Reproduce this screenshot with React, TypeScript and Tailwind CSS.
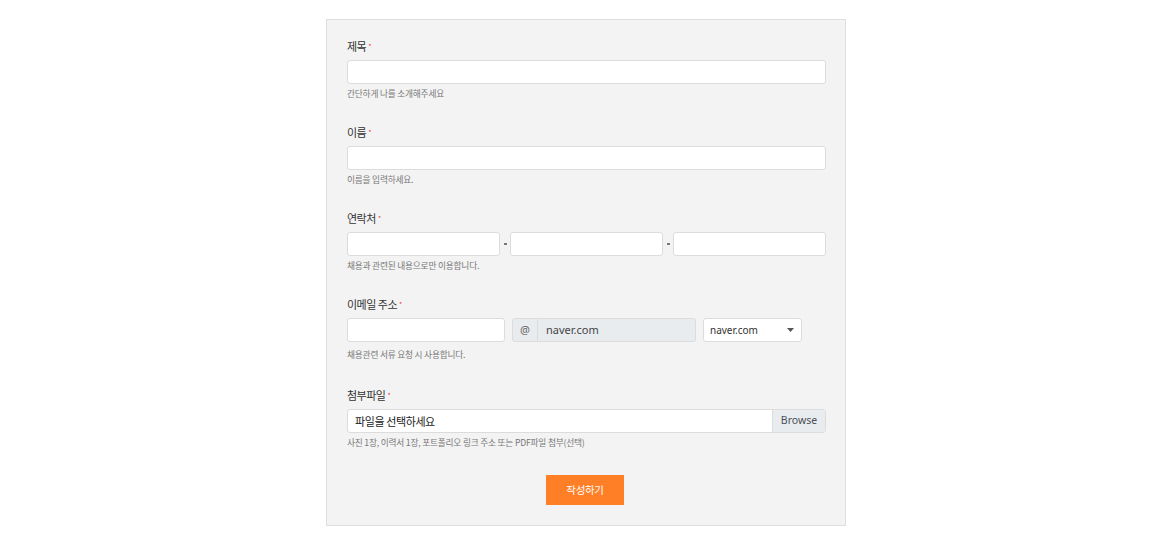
import React from "react";

const font = { fontFamily: '"Noto Sans CJK KR", "Noto Sans", sans-serif' };

function Label({ text, mb = "mb-[5px]" }: { text: string; mb?: string }) {
  return (
    <div className={`h-[18px] leading-[18px] text-[11px] tracking-[-0.5px] text-[#333] ${mb} flex items-start`}>
      <span>{text}</span>
      <span className="text-[#e8414b] text-[7px] leading-none mt-[6px] ml-[2px]">*</span>
    </div>
  );
}

function Help({ text, mt = "mt-[3px]" }: { text: string; mt?: string }) {
  return (
    <div className={`${mt} h-[14px] leading-[14px] text-[8.7px] tracking-[-0.2px] text-[#777]`}>{text}</div>
  );
}

const inputCls = "h-[24px] bg-white border border-[#dcdcdc] rounded-[3px]";

export default function App() {
  return (
    <div className="w-full h-[536px] bg-white flex justify-center pt-[19px] pl-[2px]" style={font}>
      <div className="w-[520px] h-[507px] bg-[#f3f3f3] border border-[#dedede] pl-[20px] pr-[19px] pt-[17px] pb-[19px] flex flex-col">
        {/* 제목 */}
        <div className="mb-[22px]">
          <Label text="제목" />
          <div className={`${inputCls} w-full`} />
          <Help text="간단하게 나를 소개해주세요" />
        </div>
        {/* 이름 */}
        <div className="mb-[22px]">
          <Label text="이름" />
          <div className={`${inputCls} w-full`} />
          <Help text="이름을 입력하세요." />
        </div>
        {/* 연락처 */}
        <div className="mb-[22px]">
          <Label text="연락처" />
          <div className="flex items-center">
            <div className={`${inputCls} w-[153px]`} />
            <div className="w-[10px] flex justify-center">
              <span className="block w-[3px] h-[2px] bg-[#777]" />
            </div>
            <div className={`${inputCls} w-[153px]`} />
            <div className="w-[10px] flex justify-center">
              <span className="block w-[3px] h-[2px] bg-[#777]" />
            </div>
            <div className={`${inputCls} flex-1`} />
          </div>
          <Help text="채용과 관련된 내용으로만 이용합니다." />
        </div>
        {/* 이메일 */}
        <div className="mb-[24px]">
          <Label text="이메일 주소" />
          <div className="flex items-center">
            <div className={`${inputCls} w-[158px]`} />
            <div className="ml-[7px] flex h-[24px] w-[184px]">
              <div className="w-[26px] h-full bg-[#e9ecef] border border-[#dcdcdc] rounded-l-[3px] flex items-center justify-center text-[11px] text-[#666]" style={{ fontFamily: '"Noto Sans", sans-serif' }}>
                @
              </div>
              <div className="flex-1 h-full bg-[#e9ecef] border border-l-0 border-[#dcdcdc] rounded-r-[3px] flex items-center pl-[8px] text-[11px] text-[#444]" style={{ fontFamily: '"Noto Sans", sans-serif' }}>
                naver.com
              </div>
            </div>
            <div className="ml-[7px] w-[99px] h-[24px] bg-white border border-[#dcdcdc] rounded-[3px] flex items-center justify-between pl-[6px] pr-[7px] text-[10px] text-[#333]" style={{ fontFamily: '"Noto Sans", sans-serif' }}>
              <span>naver.com</span>
              <svg width="7" height="4" viewBox="0 0 7 4">
                <path d="M0 0 L7 0 L3.5 4 Z" fill="#555" />
              </svg>
            </div>
          </div>
          <Help text="채용관련 서류 요청 시 사용합니다." mt="mt-[6px]" />
        </div>
        {/* 첨부파일 */}
        <div>
          <Label text="첨부파일" />
          <div className={`${inputCls} w-full flex items-stretch overflow-hidden`}>
            <div className="flex-1 flex items-center pl-[7px] text-[11px] tracking-[-0.4px] text-[#222]">파일을 선택하세요</div>
            <div className="w-[53px] bg-[#e9ecef] border-l border-[#dcdcdc] flex items-center justify-center text-[10.5px] text-[#495057]" style={{ fontFamily: '"Noto Sans", sans-serif' }}>
              Browse
            </div>
          </div>
          <Help text="사진 1장, 이력서 1장, 포트폴리오 링크 주소 또는 PDF파일 첨부(선택)" />
        </div>
        <div className="mt-[25px] flex justify-center pr-[3px]">
          <button className="w-[78px] h-[30px] bg-[#ff7f27] text-white text-[10.5px] tracking-[-0.3px]">작성하기</button>
        </div>
      </div>
    </div>
  );
}
